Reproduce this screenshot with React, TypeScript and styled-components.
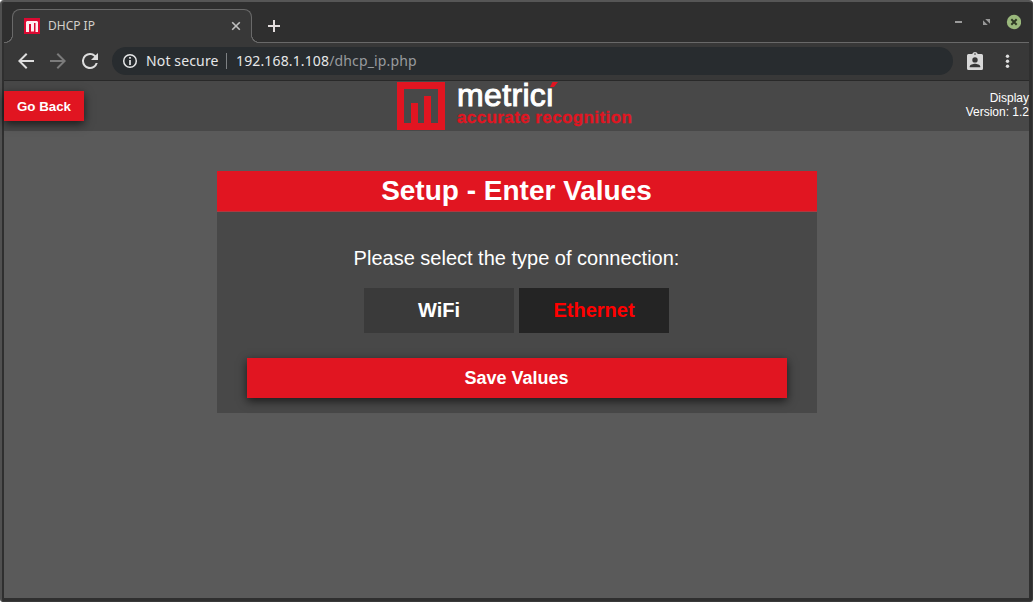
import React from "react";
import styled, { createGlobalStyle } from "styled-components";

const red = "#e11521";

const Global = createGlobalStyle`
  * { box-sizing: border-box; }
  html, body { margin: 0; padding: 0; background: #fff; }
  body { font-family: "Liberation Sans", Arial, sans-serif; overflow: hidden; }
  button { font-family: inherit; border: 0; padding: 0; cursor: pointer; }
`;

const Window = styled.div`
  width: 1033px;
  height: 602px;
  display: flex;
  flex-direction: column;
  background: #2f2f2f;
  border: 1px solid #3a3a3a;
  border-top: 2px solid #565656;
  border-left: 2px solid #505050;
  border-radius: 4px 4px 3px 3px;
  padding: 0 3px 3px 2px;
`;

const TabStrip = styled.div`
  height: 41px;
  flex: none;
  display: flex;
  align-items: flex-end;
  padding-left: 8px;
  border-bottom: 1px solid #696969;
`;

const Tab = styled.div`
  position: relative;
  width: 240px;
  height: 34px;
  margin-bottom: -1px;
  padding: 0 10px 1px 11px;
  display: flex;
  align-items: center;
  background: #383838;
  border: 1px solid #696969;
  border-bottom: 0;
  border-radius: 8px 8px 0 0;
  &::before, &::after {
    content: "";
    position: absolute;
    bottom: 0;
    width: 8px;
    height: 8px;
  }
  &::before {
    left: -8px;
    background: radial-gradient(circle at 0 0, #2f2f2f 6.7px, #696969 7px, #696969 7.7px, #383838 8.2px);
  }
  &::after {
    right: -8px;
    background: radial-gradient(circle at 100% 0, #2f2f2f 6.7px, #696969 7px, #696969 7.7px, #383838 8.2px);
  }
`;

const TabTitle = styled.span`
  flex: 1;
  margin-left: 8px;
  font: 12px/16px "Noto Sans", sans-serif;
  color: #d3cfca;
`;

const NewTab = styled.div`
  width: 14px;
  height: 33px;
  margin-left: 15px;
  display: flex;
  align-items: center;
`;

const WindowControls = styled.div`
  margin-left: auto;
  height: 41px;
  display: flex;
  align-items: center;
  padding-right: 8px;
`;

const Toolbar = styled.div`
  height: 38px;
  flex: none;
  display: flex;
  align-items: center;
  background: #383838;
  border-bottom: 1px solid #292929;
  padding: 0 13px 2px;
`;

const NavIcons = styled.div`
  display: flex;
  gap: 14px;
  width: 95px;
  flex: none;
`;

const AddressBar = styled.div`
  width: 841px;
  height: 28px;
  margin-right: 13px;
  display: flex;
  align-items: center;
  padding-left: 10px;
  border-radius: 14px;
  background: #282c2f;
  font: 14px/20px "Noto Sans", sans-serif;
  letter-spacing: 0.14px;
  color: #e6e7e8;
`;

const Security = styled.span`
  margin-left: 8px;
  width: 80px;
  white-space: nowrap;
`;

const Divider = styled.span`
  width: 1px;
  height: 16px;
  margin-right: 9px;
  background: #7d8083;
`;

const Path = styled.span`
  color: #989b9e;
`;

const Page = styled.main`
  flex: 1;
  background: #5a5a5a;
  color: #fff;
`;

const Header = styled.header`
  height: 50px;
  display: flex;
  justify-content: space-between;
  background: #484848;
`;

const ActionButton = styled.button<{ $wide?: boolean }>`
  width: ${(p) => (p.$wide ? "540px" : "80px")};
  height: ${(p) => (p.$wide ? "40px" : "30px")};
  font-size: ${(p) => (p.$wide ? "18px" : "13.33px")};
  font-weight: bold;
  color: #fff;
  background: ${red};
  box-shadow: 0 3px 9px rgba(0, 0, 0, 0.65);
`;

const HeaderSide = styled.div<{ $end?: boolean }>`
  width: 200px;
  padding-top: 10px;
  text-align: ${(p) => (p.$end ? "right" : "left")};
  font-size: 12px;
  line-height: 14px;
`;

const Brand = styled.div`
  display: flex;
  width: 239px;
  padding-top: 1px;
`;

const BrandText = styled.div`
  position: relative;
  margin-left: 12px;
  white-space: nowrap;
`;

const BrandName = styled.div`
  height: 27px;
  font: 32px/26px "Liberation Sans", Arial, sans-serif;
  -webkit-text-stroke: 1px #fff;
  letter-spacing: 0.35px;
`;

const BrandTag = styled.div`
  font: bold 17px/17px "Liberation Sans", Arial, sans-serif;
  letter-spacing: 0.4px;
  -webkit-text-stroke: 0.3px ${red};
  color: ${red};
`;

const Accent = styled.svg`
  position: absolute;
  left: 90px;
  top: -1px;
`;

const Card = styled.section`
  width: 600px;
  height: 242px;
  margin: 40px auto 0;
  display: flex;
  flex-direction: column;
  align-items: center;
  background: #484848;
`;

const CardTitle = styled.h1`
  width: 100%;
  height: 41px;
  margin: 0;
  font-size: 28px;
  line-height: 40px;
  text-align: center;
  background: ${red};
  border-bottom: 1px solid #ad3a41;
`;

const Prompt = styled.p`
  margin: 34px 0 18px;
  font-size: 20px;
  line-height: 24px;
`;

const Options = styled.div`
  display: flex;
  gap: 5px;
  margin-bottom: 25px;
`;

const Option = styled.button<{ $selected?: boolean }>`
  width: 150px;
  height: 45px;
  font-size: 20px;
  font-weight: bold;
  color: ${(p) => (p.$selected ? "#f00" : "#fff")};
  background: ${(p) => (p.$selected ? "#242424" : "#3a3a3a")};
`;

function Favicon() {
  return (
    <svg width="16" height="16" viewBox="0 0 16 16">
      <path fill="#dc0a32" d="M0 0h16v16H0z" />
      <path fill="#fff" opacity=".93" d="M3 3h10l1 1v10h-2.500V5H10v8.500H7V6H5v8H2V4z" />
    </svg>
  );
}

function MetriciMark() {
  return (
    <svg width="48" height="48" viewBox="0 0 48 48">
      <path fill={red} d="M0 0h48v48H0zM7 7v34h7V21h7v20h6V14h7v27h7V7z" fillRule="evenodd" />
    </svg>
  );
}

export default function App() {
  return (
    <>
      <Global />
      <Window>
        <TabStrip>
          <Tab>
            <Favicon />
            <TabTitle>DHCP IP</TabTitle>
            <svg width="10" height="10" viewBox="0 0 10 10" stroke="#c0c0c0" strokeWidth="1.6">
              <path d="M1.2 1.2l7.6 7.6M8.8 1.2L1.2 8.8" />
            </svg>
          </Tab>
          <NewTab>
            <svg width="14" height="14" viewBox="0 0 14 14" fill="#e4dede">
              <path d="M6 1h2v5h5v2H8v5H6V8H1V6h5z" />
            </svg>
          </NewTab>
          <WindowControls>
            <svg width="68" height="16" viewBox="0 0 68 16">
              <path d="M2 7h7v2H2z" fill="#9b9b9b" />
              <path d="M32.2 5H37v4.800zM30 6.200V11h4.800z" fill="#989898" />
              <circle cx="61" cy="8" r="7.2" fill="#9ab87c" />
              <path d="M58.3 5.3l5.4 5.4M63.7 5.3l-5.4 5.4" stroke="#2f3a25" strokeWidth="2" />
            </svg>
          </WindowControls>
        </TabStrip>
        <Toolbar>
          <NavIcons>
            <svg width="18" height="18" viewBox="3 3 18 18" fill="#dedede">
              <path d="M20 11H7.83l5.59-5.59L12 4l-8 8 8 8 1.41-1.41L7.83 13H20z" />
            </svg>
            <svg width="18" height="18" viewBox="3 3 18 18" fill="#7b7b7b">
              <path d="M12 4l-1.41 1.41L16.17 11H4v2h12.17l-5.58 5.59L12 20l8-8z" />
            </svg>
            <svg width="18" height="18" viewBox="3 3 18 18" fill="#dedede">
              <path d="M17.65 6.35A7.96 7.96 0 0 0 12 4a8 8 0 1 0 7.73 10h-2.08A6 6 0 1 1 12 6c1.66 0 3.14.69 4.22 1.78L13 11h7V4z" />
            </svg>
          </NavIcons>
          <AddressBar>
            <svg width="16" height="16" viewBox="0 0 16 16" fill="none" stroke="#e6e7e8">
              <circle cx="8" cy="8" r="6.3" strokeWidth="1.5" />
              <path d="M8 4v1.8M8 7v5" strokeWidth="1.7" />
            </svg>
            <Security>Not secure</Security>
            <Divider />
            <span>
              192.168.1.108<Path>/dhcp_ip.php</Path>
            </span>
          </AddressBar>
          <svg width="18" height="20" viewBox="0 0 18 20">
            <path
              fill="#d8d8d8"
              fillRule="evenodd"
              d="M2.5 3H6.2a3 3 0 0 1 5.6 0h3.7A1.5 1.5 0 0 1 17 4.500v13a1.500 1.500 0 0 1-1.500 1.500h-13A1.500 1.500 0 0 1 1 17.500v-13A1.500 1.500 0 0 1 2.500 3zM9 2.300a.8.8 0 1 0 0 1.600a.8.8 0 0 0 0-1.600zM9 6.200a2.700 2.700 0 1 0 0 5.400a2.700 2.700 0 0 0 0-5.400zM3.700 16.300h10.600v-.8c0-1.800-3.500-2.800-5.300-2.800s-5.300 1-5.300 2.800z"
            />
          </svg>
          <svg width="30" height="18" viewBox="0 0 30 18" fill="#dedede">
            <circle cx="23.500" cy="4.300" r="1.700" />
            <circle cx="23.500" cy="9.300" r="1.700" />
            <circle cx="23.500" cy="14.300" r="1.700" />
          </svg>
        </Toolbar>
        <Page>
          <Header>
            <HeaderSide>
              <ActionButton>Go Back</ActionButton>
            </HeaderSide>
            <Brand>
              <MetriciMark />
              <BrandText>
                <BrandName>metrici</BrandName>
                <BrandTag>accurate recognition</BrandTag>
                <Accent width="12" height="7" viewBox="0 0 12 7">
                  <path d="M0 0h9v6.500H0z" fill="#484848" />
                  <path d="M5.500 1h5.500L7 6H3z" fill={red} />
                </Accent>
              </BrandText>
            </Brand>
            <HeaderSide $end>
              Display
              <br />
              Version: 1.2
            </HeaderSide>
          </Header>
          <Card>
            <CardTitle>Setup - Enter Values</CardTitle>
            <Prompt>Please select the type of connection:</Prompt>
            <Options>
              <Option>WiFi</Option>
              <Option $selected>Ethernet</Option>
            </Options>
            <ActionButton $wide>Save Values</ActionButton>
          </Card>
        </Page>
      </Window>
    </>
  );
}
